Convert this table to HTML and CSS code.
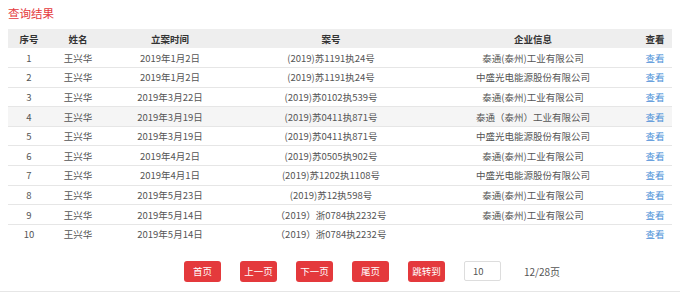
FILE: index.html
```html
<!DOCTYPE html>
<html lang="zh-CN">
<head>
    <meta charset="UTF-8">
    <meta name="viewport" content="width=device-width, initial-scale=1.0">
    <title>查询结果</title>
    <link rel="stylesheet" href="styles.css">
</head>
<body>
    <div class="result">
        <h2 class="result-title">查询结果</h2>

        <table class="result-table">
            <colgroup>
                <col class="c-no">
                <col class="c-name">
                <col class="c-date">
                <col class="c-case">
                <col class="c-company">
                <col class="c-view">
            </colgroup>
            <thead>
                <tr>
                    <th>序号</th>
                    <th>姓名</th>
                    <th>立案时间</th>
                    <th>案号</th>
                    <th>企业信息</th>
                    <th>查看</th>
                </tr>
            </thead>
            <tbody>
                <tr>
                    <td>1</td><td>王兴华</td><td>2019年1月2日</td><td>(2019)苏1191执24号</td>
                    <td>泰通(泰州)工业有限公司</td><td><a href="#">查看</a></td>
                </tr>
                <tr>
                    <td>2</td><td>王兴华</td><td>2019年1月2日</td><td>(2019)苏1191执24号</td>
                    <td>中盛光电能源股份有限公司</td><td><a href="#">查看</a></td>
                </tr>
                <tr>
                    <td>3</td><td>王兴华</td><td>2019年3月22日</td><td>(2019)苏0102执539号</td>
                    <td>泰通(泰州)工业有限公司</td><td><a href="#">查看</a></td>
                </tr>
                <tr class="hover">
                    <td>4</td><td>王兴华</td><td>2019年3月19日</td><td>(2019)苏0411执871号</td>
                    <td>泰通（泰州）工业有限公司</td><td><a href="#">查看</a></td>
                </tr>
                <tr>
                    <td>5</td><td>王兴华</td><td>2019年3月19日</td><td>(2019)苏0411执871号</td>
                    <td>中盛光电能源股份有限公司</td><td><a href="#">查看</a></td>
                </tr>
                <tr>
                    <td>6</td><td>王兴华</td><td>2019年4月2日</td><td>(2019)苏0505执902号</td>
                    <td>泰通(泰州)工业有限公司</td><td><a href="#">查看</a></td>
                </tr>
                <tr>
                    <td>7</td><td>王兴华</td><td>2019年4月1日</td><td>(2019)苏1202执1108号</td>
                    <td>中盛光电能源股份有限公司</td><td><a href="#">查看</a></td>
                </tr>
                <tr>
                    <td>8</td><td>王兴华</td><td>2019年5月23日</td><td>(2019)苏12执598号</td>
                    <td>泰通(泰州)工业有限公司</td><td><a href="#">查看</a></td>
                </tr>
                <tr>
                    <td>9</td><td>王兴华</td><td>2019年5月14日</td><td>（2019）浙0784执2232号</td>
                    <td>泰通(泰州)工业有限公司</td><td><a href="#">查看</a></td>
                </tr>
                <tr>
                    <td>10</td><td>王兴华</td><td>2019年5月14日</td><td>（2019）浙0784执2232号</td>
                    <td></td><td><a href="#">查看</a></td>
                </tr>
            </tbody>
        </table>

        <div class="pager">
            <button class="pager-btn">首页</button>
            <button class="pager-btn">上一页</button>
            <button class="pager-btn">下一页</button>
            <button class="pager-btn">尾页</button>
            <button class="pager-btn">跳转到</button>
            <input class="pager-input" type="text" value="10">
            <span class="pager-info">12/28页</span>
        </div>
    </div>
</body>
</html>
```

FILE: styles.css
```css
body {
    margin: 0;
    font-family: "Noto Sans CJK SC", "Liberation Sans", sans-serif;
    font-size: 9.5px;
    color: #555;
    background: #fff;
}
.result {
    padding: 0 8px;
    border-bottom: 1px solid #e6e6e6;
    height: 291px;
}
.result-title {
    margin: 0;
    padding-top: 5px;
    height: 24px;
    font-size: 11.5px;
    font-weight: normal;
    line-height: 16px;
    color: #e4393c;
}
.result-table {
    width: 100%;
    border-collapse: collapse;
    table-layout: fixed;
}
.c-no { width: 42px; }
.c-name { width: 56px; }
.c-date { width: 128px; }
.c-case { width: 194px; }
.c-company { width: 210px; }
.c-view { width: 34px; }
.result-table th {
    height: 19px;
    padding: 0;
    background: #eee;
    color: #333;
    font-weight: bold;
    text-align: center;
}
.result-table td {
    height: 19.6px;
    padding: 0;
    text-align: center;
    border-top: 1px solid #e6e6e6;
    box-sizing: border-box;
}
.result-table tbody tr:first-child td {
    border-top: none;
}
.result-table tr.hover td {
    background: #f5f5f5;
}
.result-table a {
    color: #4a8fd8;
    text-decoration: none;
}
.pager {
    display: flex;
    align-items: center;
    gap: 19px;
    margin-top: 17px;
    padding-left: 176px;
}
.pager-btn {
    width: 37px;
    height: 21px;
    padding: 0;
    border: none;
    border-radius: 3px;
    background: #e4393c;
    color: #fff;
    font-family: inherit;
    font-size: 9.5px;
    cursor: pointer;
}
.pager-input {
    width: 37px;
    height: 20px;
    box-sizing: border-box;
    padding: 0 0 0 8px;
    border: 1px solid #ddd;
    border-radius: 2px;
    font-family: inherit;
    font-size: 9.5px;
    color: #555;
}
.pager-info {
    margin-left: 4px;
    font-size: 10px;
}
```
